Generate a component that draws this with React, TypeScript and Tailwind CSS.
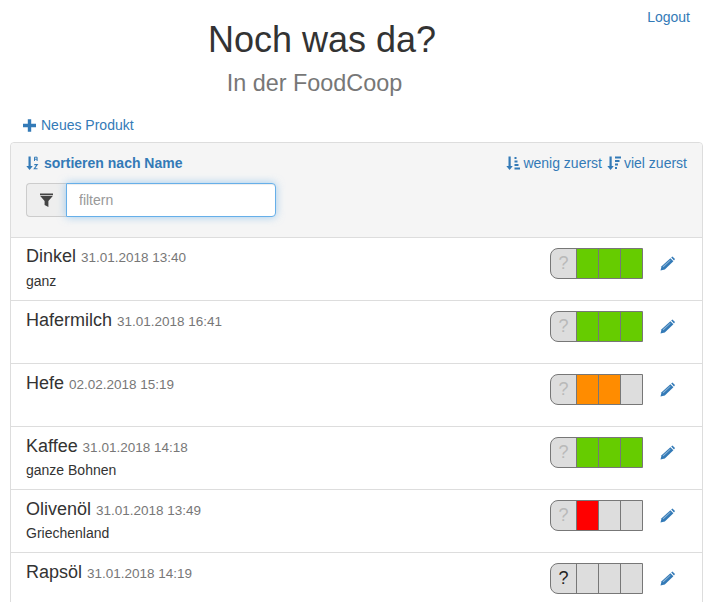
import React from 'react'

const blue = "text-[#337ab7]"

function Pencil() {
    return (
        <svg width="15" height="15" viewBox="0 0 15 15" className="text-[#337ab7]">
            <path fill="currentColor" d="M0.5 14.5 L1.6 10.2 L10.4 2.2 L13.4 5.2 L4.8 13.4 Z" />
            <path fill="currentColor" d="M11.2 1.5 L12.4 0.5 L15 3 L14 4.4 Z" />
            <path fill="#fff" d="M2.6 10.6 L3.4 11.2 L10.6 4.4 L10 3.9 Z" opacity="0.45" />
        </svg>
    )
}

function Plus() {
    return (
        <svg width="13" height="13" viewBox="0 0 13 13" className="text-[#337ab7]">
            <path fill="currentColor" d="M4.8 0.2h3.4v4.6h4.8v3.4H8.2v4.6H4.8V8.2H0V4.8h4.8z" />
        </svg>
    )
}

function SortArrow() {
    return <path fill="currentColor" d="M2.5 0.5h2.2v9.5h2.1l-3.2 4-3.3-4h2.2z" />
}

function SortAlpha() {
    return (
        <svg width="13" height="14" viewBox="0 0 13 14" className="text-[#337ab7]">
            <SortArrow />
            <path fill="none" stroke="currentColor" strokeWidth="1" d="M8.5 5V1.2h2.6V5M8.5 3.2h2.6" />
            <path fill="none" stroke="currentColor" strokeWidth="1.1" d="M8.3 8.6h3l-3 4.2h3.2" />
        </svg>
    )
}

function SortLow() {
    return (
        <svg width="14" height="14" viewBox="0 0 14 14" className="text-[#337ab7]">
            <SortArrow />
            <path fill="currentColor" d="M8.5 1h2v2h-2zM8.5 4.5h3v2h-3zM8.5 8h4v2h-4zM8.5 11.5h5.5v2H8.5z" />
        </svg>
    )
}

function SortHigh() {
    return (
        <svg width="14" height="14" viewBox="0 0 14 14" className="text-[#337ab7]">
            <SortArrow />
            <path fill="currentColor" d="M8 0.5h6v2H8zM8 4h4.5v2H8zM8 7.5h3v2H8zM8 11h2v2H8z" />
        </svg>
    )
}

function Filter() {
    return (
        <svg width="13" height="14" viewBox="0 0 13 14" className="text-[#444]">
            <path fill="currentColor" d="M0 0.5h13v1.5H0zM0 2.8h13L8.4 8v6L4.6 12V8z" />
        </svg>
    )
}

function Level({ cells, known }: { cells: string[], known?: boolean }) {
    return (
        <div className="flex h-[31px] w-[93px] border border-[#777] rounded-l-[8px] bg-[#ddd] overflow-hidden">
            <div className={`w-[25px] flex items-center justify-center text-[18px] ${known ? "text-[#222]" : "text-[#b9b9b9]"}`}>?</div>
            {cells.map((c, i) => (
                <div key={i} className={`flex-1 border-l border-[#777] ${c}`}></div>
            ))}
        </div>
    )
}

const green = "bg-[#66cc00]"
const orange = "bg-[#ff8c00]"
const red = "bg-[#ff0000]"
const none = "bg-[#ddd]"

const products = [
    { name: "Dinkel", date: "31.01.2018 13:40", note: "ganz", cells: [green, green, green] },
    { name: "Hafermilch", date: "31.01.2018 16:41", note: "", cells: [green, green, green] },
    { name: "Hefe", date: "02.02.2018 15:19", note: "", cells: [orange, orange, none] },
    { name: "Kaffee", date: "31.01.2018 14:18", note: "ganze Bohnen", cells: [green, green, green] },
    { name: "Olivenöl", date: "31.01.2018 13:49", note: "Griechenland", cells: [red, none, none] },
    { name: "Rapsöl", date: "31.01.2018 14:19", note: "", cells: [none, none, none], known: true },
]

export default function App() {
    return (
        <div className="h-[602px] overflow-hidden bg-white px-[10px] font-['Liberation_Sans',Arial,sans-serif] text-[14px] text-[#333]">
            <div className="relative w-[693px] h-[142px]">
                <a className={`absolute right-[13px] top-[7px] ${blue}`}>Logout</a>
                <div className="flex flex-col items-center pr-[69px] pt-[20px]">
                    <h1 className="text-[36px] leading-[40px] text-[#333]">Noch was da?</h1>
                    <h2 className="mt-[9px] pr-[15px] text-[23.4px] leading-[28px] text-[#777]">In der FoodCoop</h2>
                </div>
                <a className={`mt-[18px] flex w-fit ml-[13px] items-center gap-[5px] ${blue}`}>
                    <Plus />
                    Neues Produkt
                </a>
            </div>
            <div className="w-[693px] border border-[#ddd] rounded-t-[4px]">
                <div className="h-[95px] bg-[#f5f5f5] border-b border-[#ddd] px-[15px] pt-[10px] rounded-t-[4px]">
                    <div className="flex justify-between leading-[20px]">
                        <a className={`flex items-center gap-[5px] font-bold ${blue}`}>
                            <SortAlpha />
                            sortieren nach Name
                        </a>
                        <div className={`flex items-center ${blue}`}>
                            <SortLow />
                            <span className="ml-[3px]">wenig zuerst</span>
                            <span className="ml-[5px]"><SortHigh /></span>
                            <span className="ml-[3px]">viel zuerst</span>
                        </div>
                    </div>
                    <div className="flex mt-[10px] w-[250px] h-[34px]">
                        <div className="flex items-center justify-center w-[40px] border border-[#ccc] border-r-0 rounded-l-[4px] bg-[#eee]">
                            <Filter />
                        </div>
                        <input
                            placeholder="filtern"
                            className="flex-1 min-w-0 px-[12px] bg-white border border-[#66afe9] rounded-r-[4px] text-[14px] placeholder:text-[#999] outline-none shadow-[inset_0_1px_1px_rgba(0,0,0,0.075),0_0_8px_rgba(102,175,233,0.6)]"
                        />
                    </div>
                </div>
                {products.map((p, i) => (
                    <div key={p.name} className={`flex justify-between pl-[15px] pr-[27px] pt-[10px] ${i > 0 ? "h-[63px] border-t border-[#ddd]" : "h-[62px]"}`}>
                        <div className={i === 0 ? "-mt-[1px]" : ""}>
                            <div className="leading-[18px]">
                                <span className="text-[18px] text-[#333]">{p.name}</span>{" "}
                                <span className="ml-[1px] text-[13.5px] text-[#777]">{p.date}</span>
                            </div>
                            <div className={`leading-[20px] text-[14px] ${i === 0 ? "mt-[4px]" : "mt-[3px]"}`}>{p.note}</div>
                        </div>
                        <div className="flex items-start gap-[17px]">
                            <Level cells={p.cells} known={p.known} />
                            <div className="pt-[8px]"><Pencil /></div>
                        </div>
                    </div>
                ))}
            </div>
        </div>
    )
}
